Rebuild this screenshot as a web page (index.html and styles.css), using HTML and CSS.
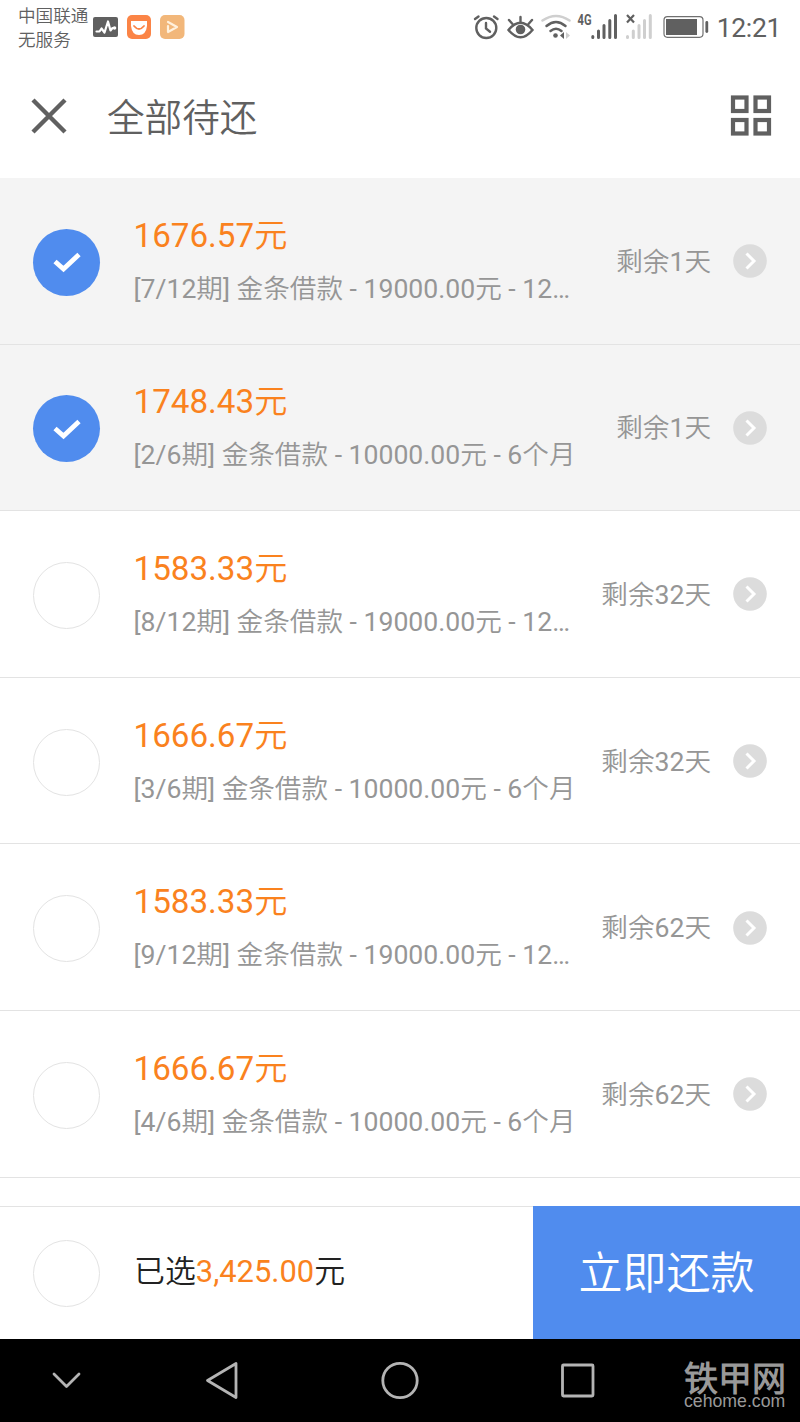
FILE: index.html
```html
<!DOCTYPE html>
<html lang="zh-CN">
<head>
    <meta charset="UTF-8">
    <title>全部待还</title>
    <meta name="viewport" content="width=device-width, initial-scale=1.0">
    <link rel="stylesheet" href="styles.css">
</head>
<body>

<div class="status-bar">
    <div class="carrier">中国联通<br>无服务</div>
    <svg class="status-left" width="94" height="30" viewBox="0 0 94 30">
        <rect x="1" y="5" width="25" height="20" rx="2" fill="#606060"/>
        <path d="M4.500 19.500h3l2-3 3 4 3.500-11 2.500 9 2-2.500h2" fill="none" stroke="#fff" stroke-width="2.200" stroke-linejoin="round" stroke-linecap="round"/>
        <circle cx="22.500" cy="16" r="1.800" fill="#fff"/>
        <rect x="35" y="3" width="24" height="24" rx="5" fill="#fb8446"/>
        <path d="M39 9h16v5q-1 9-8 9t-8-9z" fill="#fff"/>
        <path d="M42 14q5 6 10 0" fill="none" stroke="#fb8446" stroke-width="1.800" stroke-linecap="round"/>
        <rect x="68" y="3" width="24.500" height="24" rx="5" fill="#f2b77a"/>
        <path d="M76 10l9 5-9 5M76 14v6" fill="none" stroke="#fff1dd" stroke-width="2.200" stroke-linecap="round" stroke-linejoin="round"/>
    </svg>
    <svg class="status-right" width="240" height="30" viewBox="470 12 240 30">
        <g fill="none" stroke="#606060" stroke-width="2.400" stroke-linecap="round">
            <circle cx="486.300" cy="28" r="10"/>
            <path d="M486 23v5.500l4 3.200M475 19l3.500-2.500M497.500 19l-3.500-2.500"/>
            <path d="M508.500 30q12-14.500 24 0q-12 14.500-24 0zM520.500 22v-5M512.500 24l-3.500-4M528.500 24l3.500-4"/>
        </g>
        <circle cx="520.500" cy="29.500" r="4.800" fill="#606060"/>
        <path d="M542.500 20.500q13.500-9 27 0" fill="none" stroke="#cfcfcf" stroke-width="2.500" stroke-linecap="round"/>
        <path d="M546.500 26q9.500-8 19 0M550.500 31q5.500-4.500 11 0" fill="none" stroke="#606060" stroke-width="2.500" stroke-linecap="round"/>
        <circle cx="555.500" cy="35.500" r="2.300" fill="#606060"/>
        <path d="M564 32v7l-4-3.500z" fill="#606060"/>
        <path d="M566 32v7l4-3.500z" fill="#cfcfcf"/>
        <text x="577.500" y="25" class="net" textLength="14" lengthAdjust="spacingAndGlyphs">4G</text>
        <path d="M592.800 37.500v-1M598.500 37.500v-6.500M604 37.500v-12M609.800 37.500v-17M615.500 37.500v-22" stroke="#606060" stroke-width="3" stroke-linecap="round"/>
        <path d="M627.500 37.500v-1M633.300 37.500v-6.500M639 37.500v-12M644.500 37.500v-17M650.300 37.500v-22" stroke="#cfcfcf" stroke-width="3" stroke-linecap="round"/>
        <path d="M627 15l7 7.500M634 15l-7 7.500" stroke="#606060" stroke-width="2.200"/>
        <rect x="664" y="16.700" width="39" height="20.600" rx="3.500" fill="none" stroke="#707070" stroke-width="1.200"/>
        <rect x="666" y="19" width="31" height="16" fill="#606060"/>
        <path d="M706.800 22.500v9" stroke="#606060" stroke-width="2.800" stroke-linecap="round"/>
    </svg>
    <div class="clock">12:21</div>
</div>

<div class="header">
    <svg class="close" width="36" height="36" viewBox="0 0 36 36">
        <path d="M2 2l32 32M34 2L2 34" stroke="#606060" stroke-width="4.400"/>
    </svg>
    <div class="title">全部待还</div>
    <svg class="grid" width="42" height="42" viewBox="0 0 42 42">
        <g fill="none" stroke="#606060" stroke-width="4.200">
            <rect x="3" y="2.500" width="13.500" height="13.500"/>
            <rect x="25.500" y="2.500" width="13.500" height="13.500"/>
            <rect x="3" y="25" width="13.500" height="13.500"/>
            <rect x="25.500" y="25" width="13.500" height="13.500"/>
        </g>
    </svg>
</div>

<div class="list" id="list"></div>

<div class="footer">
    <div class="check"></div>
    <div class="total">已选<span>3,425.00</span>元</div>
    <div class="pay">立即还款</div>
</div>

<div class="nav-bar">
    <svg width="800" height="83" viewBox="0 0 800 83">
        <g fill="none" stroke="#b4b4b4" stroke-width="2.800" stroke-linecap="round" stroke-linejoin="round">
            <path d="M54 35l12.500 12.500 12.500-12.500"/>
            <path d="M207.500 41.500l28.500-17v34z"/>
            <circle cx="400" cy="41.500" r="17.200"/>
            <rect x="562.500" y="26" width="30.500" height="31" rx="1"/>
        </g>
    </svg>
    <div class="watermark">
        <div class="mark-name">铁甲网</div>
        <div class="mark-url">cehome.com</div>
    </div>
</div>

<script>
const bills = [
    { amount: '1676.57', desc: '[7/12期] 金条借款 - 19000.00元 - 12…', days: 1, checked: true },
    { amount: '1748.43', desc: '[2/6期] 金条借款 - 10000.00元 - 6个月', days: 1, checked: true },
    { amount: '1583.33', desc: '[8/12期] 金条借款 - 19000.00元 - 12…', days: 32 },
    { amount: '1666.67', desc: '[3/6期] 金条借款 - 10000.00元 - 6个月', days: 32 },
    { amount: '1583.33', desc: '[9/12期] 金条借款 - 19000.00元 - 12…', days: 62 },
    { amount: '1666.67', desc: '[4/6期] 金条借款 - 10000.00元 - 6个月', days: 62 }
];

const tick = '<svg width="28" height="22" viewBox="0 0 28 22"><path d="M2 10.500l8.500 7.500L26 3.500" fill="none" stroke="#fff" stroke-width="4.800"/></svg>';

document.getElementById('list').innerHTML = bills.map(b => `
    <div class="row ${b.checked ? 'selected' : ''}">
        <div class="check ${b.checked ? 'on' : ''}">${b.checked ? tick : ''}</div>
        <div class="info">
            <div class="amount">${b.amount}元</div>
            <div class="desc">${b.desc}</div>
        </div>
        <div class="days">剩余${b.days}天</div>
        <svg class="arrow" width="34" height="34" viewBox="0 0 34 34">
            <circle cx="17" cy="17" r="16.800" fill="#dcdcdc"/>
            <path d="M13.500 9.500l7.500 7.500-7.500 7.500" fill="none" stroke="#fff" stroke-width="3"/>
        </svg>
    </div>`).join('');
</script>

</body>
</html>
```
FILE: styles.css
```css
* {
    box-sizing: border-box;
}
body {
    margin: 0;
    height: 1422px;
    display: flex;
    flex-direction: column;
    overflow: hidden;
    background: #fff;
    font-family: Roboto, "Noto Sans CJK SC DemiLight", "Noto Sans CJK SC", sans-serif;
    white-space: nowrap;
}
svg {
    display: block;
    flex: none;
}
.status-bar {
    height: 54px;
    display: flex;
    align-items: center;
    padding: 0 19px 0 18px;
    color: #606060;
}
.carrier {
    width: 74px;
    font-size: 17.6px;
    line-height: 24px;
    padding-top: 2px;
}
.status-right {
    margin-left: auto;
}
.net {
    font-family: Roboto, sans-serif;
    font-size: 14px;
    font-weight: 700;
    fill: #606060;
}
.clock {
    width: 71px;
    text-align: right;
    font-size: 26.6px;
    letter-spacing: -0.4px;
}
.header {
    height: 124px;
    display: flex;
    align-items: center;
    padding: 0 28px 0 31px;
}
.title {
    flex: 1;
    margin-left: 40px;
    padding-top: 3px;
    font-size: 37.6px;
    line-height: 50px;
    color: #606060;
}
.list {
    height: 1028px;
}
.row {
    height: 166.6px;
    display: flex;
    align-items: center;
    padding: 2px 33px 0 33px;
    border-bottom: 1px solid #e3e3e3;
}
.row.selected {
    background: #f4f4f4;
}
.check {
    flex: none;
    width: 67px;
    height: 67px;
    margin-top: 1px;
    border: 1px solid #e3e3e3;
    border-radius: 50%;
    background: #fff;
}
.check.on {
    display: flex;
    align-items: center;
    justify-content: center;
    border: none;
    background: #508cee;
}
.info {
    width: 445px;
    margin-left: 33.5px;
}
.amount {
    font-size: 33.2px;
    line-height: 48px;
    color: #fa821e;
}
.desc {
    margin-top: 7px;
    margin-bottom: 1px;
    font-size: 26.6px;
    line-height: 44px;
    color: #969696;
}
.days {
    margin-left: auto;
    margin-right: 22px;
    font-size: 26.6px;
    line-height: 40px;
    color: #969696;
}
.arrow {
    margin-top: -1px;
}
.footer {
    height: 133px;
    display: flex;
    align-items: center;
    padding-left: 33px;
    border-top: 1px solid #e3e3e3;
}
.total {
    margin-left: 34px;
    padding-bottom: 9px;
    font-size: 30.9px;
    color: #222;
}
.total span {
    color: #fa821e;
}
.pay {
    width: 267px;
    height: 133px;
    margin-left: auto;
    margin-top: -1px;
    background: #508cee;
    color: #fff;
    font-size: 44px;
    line-height: 137px;
    text-align: center;
}
.nav-bar {
    position: relative;
    height: 83px;
    background: #000;
}
.watermark {
    position: absolute;
    left: 684px;
    top: 23px;
    color: #999;
}
.mark-name {
    font-size: 34px;
    font-weight: 700;
    line-height: 34px;
}
.mark-url {
    font-family: "Liberation Sans", sans-serif;
    font-size: 17.7px;
    line-height: 10px;
}
```
